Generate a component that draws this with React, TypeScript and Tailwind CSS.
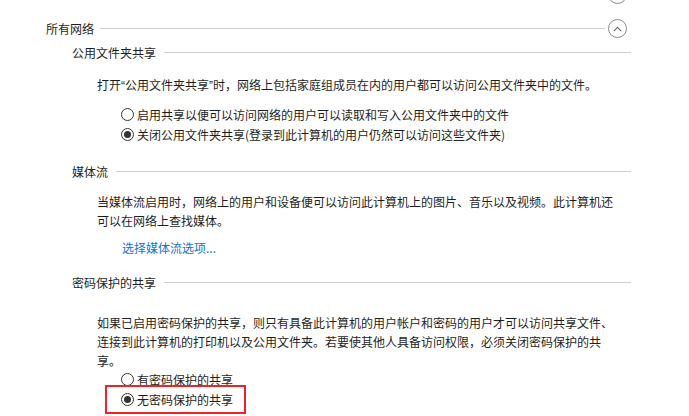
/**
 * 高级共享设置 - 所有网络 section.
 */

const FONT = {
  fontFamily: '"Microsoft YaHei", "Noto Sans CJK SC", "Noto Sans", sans-serif',
};

function CollapseButton() {
  return (
    <span className="flex h-[19px] w-[19px] shrink-0 items-center justify-center rounded-full border border-[#8c8c8c] bg-white">
      <svg width="9" height="6" viewBox="0 0 9 6" fill="none">
        <path d="M0.8 5.2 L4.5 1.3 L8.2 5.2" stroke="#6e6e6e" strokeWidth="1.1" />
      </svg>
    </span>
  );
}

function Radio({ checked }: { checked?: boolean }) {
  return (
    <span className="mr-[3px] flex h-[13px] w-[13px] shrink-0 items-center justify-center rounded-full border border-[#333] bg-white">
      {checked && <span className="h-[7px] w-[7px] rounded-full bg-[#333]" />}
    </span>
  );
}

function SubHeader({ title }: { title: string }) {
  return (
    <div className="flex items-center pl-[72px] pr-[58px]">
      <span>{title}</span>
      <span className="ml-[8px] h-px flex-1 bg-[#cfcfcf]" />
    </div>
  );
}

/** Narrow latin quotes, as the original font draws them. */
function Q({ children }: { children: string }) {
  return <span style={{ fontFamily: '"Liberation Sans", sans-serif' }}>{children}</span>;
}

export default function App() {
  return (
    <div
      className="h-[416px] w-[689px] overflow-hidden bg-white text-[12px] leading-[19px] text-[#1e1e1e]"
      style={FONT}
    >
      {/* bottom of the previous section's button */}
      <div className="flex h-[4px] justify-end overflow-hidden pr-[62px]">
        <div className="-mt-[15px]">
          <CollapseButton />
        </div>
      </div>

      <div className="mt-[15px] flex items-center pl-[46px] pr-[62px]">
        <span>所有网络</span>
        <span className="ml-[6px] mr-[3px] h-px flex-1 bg-[#cfcfcf]" />
        <CollapseButton />
      </div>

      <div className="mt-[5px]">
        <SubHeader title="公用文件夹共享" />
      </div>

      <p className="mt-[13px] pl-[97px]">
        打开<Q>“</Q>公用文件夹共享<Q>”</Q>时，网络上包括家庭组成员在内的用户都可以访问公用文件夹中的文件。
      </p>

      <div className="mt-[9px] flex flex-col gap-[1px] pl-[121px]">
        <label className="flex items-center">
          <Radio />
          启用共享以便可以访问网络的用户可以读取和写入公用文件夹中的文件
        </label>
        <label className="flex items-center">
          <Radio checked />
          关闭公用文件夹共享(登录到此计算机的用户仍然可以访问这些文件夹)
        </label>
      </div>

      <div className="mt-[18px]">
        <SubHeader title="媒体流" />
      </div>

      <p className="mt-[11px] w-[618px] pl-[97px]">
        当媒体流启用时，网络上的用户和设备便可以访问此计算机上的图片、音乐以及视频。此计算机还可以在网络上查找媒体。
      </p>

      <a className="mt-[8px] block pl-[122px] text-[#1a6fd0]">选择媒体流选项...</a>

      <div className="mt-[16px]">
        <SubHeader title="密码保护的共享" />
      </div>

      <p className="mt-[21px] w-[618px] pl-[97px]">
        如果已启用密码保护的共享，则只有具备此计算机的用户帐户和密码的用户才可以访问共享文件、连接到此计算机的打印机以及公用文件夹。若要使其他人具备访问权限，必须关闭密码保护的共享。
      </p>

      <div className="flex flex-col pl-[121px]">
        <label className="flex items-center">
          <Radio />
          有密码保护的共享
        </label>
        <div className="-ml-[16px] -mt-[4px] w-[141px] border-2 border-[#e8262a] py-[3px] pl-[14px]">
          <label className="flex items-center">
            <Radio checked />
            无密码保护的共享
          </label>
        </div>
      </div>
    </div>
  );
}
